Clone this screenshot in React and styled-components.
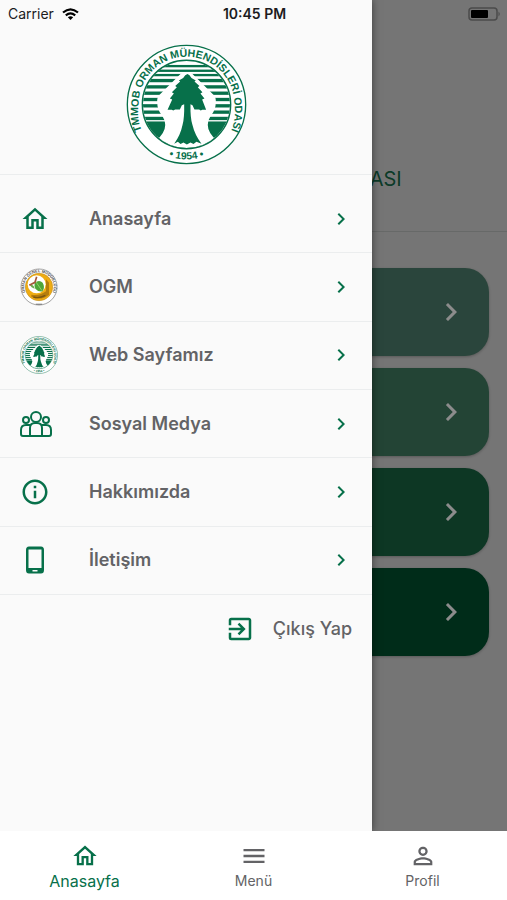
import React, { useState } from 'react'
import styled, { createGlobalStyle } from 'styled-components'
import {
    MdOutlineHome,
    MdInfoOutline,
    MdChevronRight,
    MdExitToApp,
    MdMenu,
    MdPersonOutline,
} from 'react-icons/md'

// ------------------------------------------Styled---------------------------------------------

const GlobalStyle = createGlobalStyle`
    * {
        box-sizing: border-box;
    }
    body {
        margin: 0;
        font-family: Inter, 'Liberation Sans', sans-serif;
        color: #636366;
        background: #ffffff;
    }
    button {
        font-family: inherit;
        border: none;
        background: none;
        padding: 0;
        cursor: pointer;
    }
    svg {
        display: block;
        flex-shrink: 0;
    }
`

const AppContainer = styled.div`
    min-height: 100vh;
    display: flex;
    flex-direction: column;
`

const Screen = styled.div`
    flex: 1;
    position: relative;
    display: flex;
    flex-direction: column;
    overflow: hidden;
`

const StatusBar = styled.header`
    position: absolute;
    top: 0;
    left: 0;
    right: 0;
    z-index: 3;
    height: 27px;
    padding: 0 6px 0 8px;
    display: grid;
    grid-template-columns: 1fr auto 1fr;
    align-items: center;
    color: #1c1c1e;
    font-size: 14px;
`

const Carrier = styled.span`
    display: flex;
    align-items: center;
    gap: 8px;
`

const Clock = styled.time`
    font-weight: 600;
`

const Battery = styled.span`
    justify-self: end;
`

// tela que fica atrás do menu
const HomePage = styled.main`
    flex: 1;
    display: flex;
    flex-direction: column;
    background: #d6d6d6;
`

const HomeTitle = styled.h1`
    margin: 0;
    height: 232px;
    padding-bottom: 40px;
    display: flex;
    align-items: flex-end;
    justify-content: center;
    border-bottom: 1px solid #bcbfbe;
    font-size: 20px;
    line-height: 24px;
    font-weight: 400;
    color: #176c4a;
`

const CardList = styled.div`
    display: flex;
    flex-direction: column;
    gap: 12px;
    padding: 36px 18px;
`

const Card = styled.button`
    height: 88px;
    padding: 0 20px;
    display: flex;
    align-items: center;
    justify-content: flex-end;
    border-radius: 24px;
    color: #ffffff;
    background: ${(props) => props.$color};
    box-shadow: 0 1px 3px rgba(0, 0, 0, 0.25);
`

const Overlay = styled.div`
    position: absolute;
    inset: 0;
    z-index: 1;
    background: rgba(0, 0, 0, 0.45);
`

const Drawer = styled.aside`
    position: absolute;
    top: 0;
    bottom: 0;
    left: 0;
    z-index: 2;
    width: 73.4%;
    display: flex;
    flex-direction: column;
    background: #fafafa;
    box-shadow: 0 0 8px rgba(0, 0, 0, 0.5);
`

const DrawerHeader = styled.div`
    display: flex;
    justify-content: center;
    padding: 44px 0 9px;
    border-bottom: 1px solid #ebedee;
`

const MenuList = styled.nav`
    display: grid;
    grid-auto-rows: 1fr;
    min-height: 420px;
    padding-top: 10px;
`

const MenuItem = styled.button`
    display: grid;
    grid-template-columns: 69px 1fr auto;
    align-items: center;
    padding: 0 19px 0 20px;
    border-bottom: 1px solid #ebedee;
    color: #07704a;
    text-align: left;
`

const MenuLabel = styled.span`
    font-size: 18px;
    line-height: 24px;
    font-weight: 600;
    color: #636366;
`

const Logout = styled.button`
    align-self: flex-end;
    height: 68px;
    padding: 0 20px;
    display: flex;
    align-items: center;
    gap: 18px;
    font-size: 18px;
    line-height: 24px;
    font-weight: 500;
    color: #636366;
`

const TabBar = styled.nav`
    display: grid;
    grid-template-columns: repeat(3, 1fr);
    height: 69px;
    background: #ffffff;
`

const Tab = styled.button`
    display: flex;
    flex-direction: column;
    align-items: center;
    padding-top: 11px;
    font-size: ${(props) => (props.$active ? '16px' : '14px')};
    line-height: 22px;
    color: ${(props) => (props.$active ? '#07704a' : '#636366')};
`

// ------------------------------------------Icons----------------------------------------------

const GREEN = '#07704a'

const stripes = [81, 95, 108, 123, 142, 161, 180, 199, 218, 237]

const OrmanLogo = ({ size, id }) => (
    <svg width={size} height={size} viewBox="18 18 364 364" role="img" aria-label="TMMOB Orman Mühendisleri Odası">
        <defs>
            <clipPath id={`${id}-clip`}>
                <circle cx="200" cy="200" r="131" />
            </clipPath>
            <path id={`${id}-top`} d="M82 308A144 144 0 0 1 56 200A144 144 0 0 1 344 200A144 144 0 0 1 318 308" />
            <path id={`${id}-bottom`} d="M110 339A167 167 0 0 0 290 339" />
        </defs>
        <circle cx="200" cy="200" r="178" fill="#ffffff" stroke={GREEN} strokeWidth="4" />
        <g clipPath={`url(#${id}-clip)`} fill={GREEN}>
            {stripes.map((y) => (
                <rect key={y} x="60" y={y} width="280" height={y < 120 ? 7 : 10} />
            ))}
            <rect x="60" y="251" width="280" height="90" />
            <path
                fill="#ffffff"
                d="M190 104L182 108L122 168Q110 178 112 194Q112 214 124 230Q136 246 136 262Q136 286 106 312L140 350H260L294 312Q264 286 264 262Q264 246 276 230Q288 214 288 194Q290 178 278 168L218 108L210 104Z"
            />
            <path
                d="M203 108Q196 110 190 120L177 128L181 131L166 144L171 148L156 163L162 167L150 182L157 185L143 216H156L160 218L166 215H180L186 202L193 199Q194 240 188 262Q182 292 163 318L174 312L182 319L191 314L201 320L212 314L221 319L230 312L245 318Q225 292 218 262Q211 240 212 199L218 202L224 215H238L243 218L247 216H259L247 185L254 182L242 167L248 163L234 148L239 144L224 131L228 128L215 120Q209 110 203 108Z"
            />
        </g>
        <circle cx="200" cy="200" r="133" fill="none" stroke={GREEN} strokeWidth="4" />
        <g fill={GREEN} fontFamily="'Liberation Sans', Arial, sans-serif" fontWeight="700" textAnchor="middle">
            <text fontSize="32">
                <textPath href={`#${id}-top`} startOffset="50%">TMMOB ORMAN MÜHENDİSLERİ ODASI</textPath>
            </text>
            <text fontSize="31">
                <textPath href={`#${id}-bottom`} startOffset="50%">• 1954 •</textPath>
            </text>
        </g>
    </svg>
)

const OgmLogo = () => (
    <svg width="38" height="38" viewBox="0 0 114 114">
        <defs>
            <path id="ogm-arc" d="M19 79A44 44 0 1 1 95 79" />
        </defs>
        <circle cx="57" cy="57" r="54" fill="#ffffff" stroke="#a3a3a3" strokeWidth="3" />
        <text fontFamily="'Liberation Sans', Arial, sans-serif" fontSize="12" fontWeight="700" fill="#4d4d4d" textAnchor="middle">
            <textPath href="#ogm-arc" startOffset="50%">ORMAN GENEL MÜDÜRLÜĞÜ</textPath>
        </text>
        <circle cx="57" cy="57" r="41" fill="#efac12" stroke="#c4932c" strokeWidth="2" />
        <path d="M34 80Q60 84 78 70V34L87 44V80Q62 100 34 86Z" fill="#b57d0c" />
        <path d="M40 87Q58 92 76 82" fill="none" stroke="#7a5610" strokeWidth="4" />
        <circle cx="50" cy="49" r="27" fill="#ffffff" />
        <path d="M44 44Q58 34 68 44Q76 58 68 70Q54 72 46 62Q42 54 44 44Z" fill="#4fa63a" />
        <path d="M48 42L66 68" stroke="#8ccf63" strokeWidth="3" />
        <path d="M28 48Q34 60 44 62Q42 50 28 48Z" fill="#69a94e" />
        <path d="M50 26L45 43L28 52" fill="none" stroke="#a4583c" strokeWidth="5" />
        <path d="M47 109H67" stroke="#8a8a8a" strokeWidth="4" />
    </svg>
)

const PeopleIcon = () => (
    <svg width="32" height="28" viewBox="0 0 32 28" fill="none" stroke="currentColor" strokeWidth="2">
        <circle cx="16" cy="7" r="5" />
        <circle cx="6" cy="10" r="3" />
        <circle cx="26" cy="10" r="3" />
        <path d="M10 26V18Q10 13 15 13H17Q22 13 22 18V26" />
        <path d="M10 15H6Q1 15 1 20V24Q1 26 3 26H29Q31 26 31 24V20Q31 15 26 15H22" />
    </svg>
)

const PhoneIcon = () => (
    <svg width="30" height="28" viewBox="0 0 30 28">
        <path
            fill="currentColor"
            fillRule="evenodd"
            d="M9 0.500H21Q24 0.500 24 4V24Q24 27.500 21 27.500H9Q6 27.500 6 24V4Q6 0.500 9 0.500ZM8.500 3.500V22H21.500V3.500ZM12.500 24V25.500H17.500V24Z"
        />
    </svg>
)

const WifiIcon = () => (
    <svg width="17" height="12" viewBox="0 0 17 12" fill="none" stroke="#000000" strokeWidth="2.200">
        <path d="M1 4.500Q8.500 -1.900 16 4.500" />
        <path d="M3.800 7.400Q8.500 3.500 13.200 7.400" />
        <path d="M8.500 12L5.800 9.300Q8.500 7.300 11.200 9.300Z" fill="#000000" stroke="none" />
    </svg>
)

const BatteryIcon = () => (
    <svg width="33" height="14" viewBox="0 0 33 14">
        <rect x="1" y="1" width="28" height="12" rx="3" fill="#757575" stroke="#4b4b4b" strokeWidth="1.500" />
        <rect x="3" y="3" width="17" height="8" rx="1" fill="#000000" />
        <path d="M30.500 4.500Q33 7 30.500 9.500Z" fill="#4b4b4b" />
    </svg>
)

// -------------------------------------------Structure---------------------------------------------

const menuItems = [
    { label: 'Anasayfa', icon: <MdOutlineHome size={30} /> },
    { label: 'OGM', icon: <OgmLogo /> },
    { label: 'Web Sayfamız', icon: <OrmanLogo size={38} id="mini" /> },
    { label: 'Sosyal Medya', icon: <PeopleIcon /> },
    { label: 'Hakkımızda', icon: <MdInfoOutline size={30} /> },
    { label: 'İletişim', icon: <PhoneIcon /> },
]

const cardColors = ['#4e7f6d', '#417c62', '#186443', '#00502f']

const tabs = [
    { label: 'Anasayfa', Icon: MdOutlineHome },
    { label: 'Menü', Icon: MdMenu },
    { label: 'Profil', Icon: MdPersonOutline },
]

export default function App() {
    const [activeTab, setActiveTab] = useState('Anasayfa')

    return (
        <AppContainer>
            <GlobalStyle />
            <Screen>
                <StatusBar>
                    <Carrier>Carrier <WifiIcon /></Carrier>
                    <Clock>10:45 PM</Clock>
                    <Battery><BatteryIcon /></Battery>
                </StatusBar>

                <HomePage>
                    <HomeTitle>ORMAN MÜHENDİSLERİ ODASI</HomeTitle>
                    <CardList>
                        {cardColors.map((color) => (
                            <Card key={color} $color={color}>
                                <MdChevronRight size={36} />
                            </Card>
                        ))}
                    </CardList>
                </HomePage>
                <Overlay />

                <Drawer>
                    <DrawerHeader>
                        <OrmanLogo size={121} id="logo" />
                    </DrawerHeader>
                    <MenuList>
                        {menuItems.map((item) => (
                            <MenuItem key={item.label}>
                                {item.icon}
                                <MenuLabel>{item.label}</MenuLabel>
                                <MdChevronRight size={24} />
                            </MenuItem>
                        ))}
                    </MenuList>
                    <Logout>
                        <MdExitToApp size={30} color={GREEN} />
                        Çıkış Yap
                    </Logout>
                </Drawer>
            </Screen>

            <TabBar>
                {tabs.map(({ label, Icon }) => (
                    <Tab key={label} $active={label === activeTab} onClick={() => setActiveTab(label)}>
                        <Icon size={28} />
                        {label}
                    </Tab>
                ))}
            </TabBar>
        </AppContainer>
    )
}
